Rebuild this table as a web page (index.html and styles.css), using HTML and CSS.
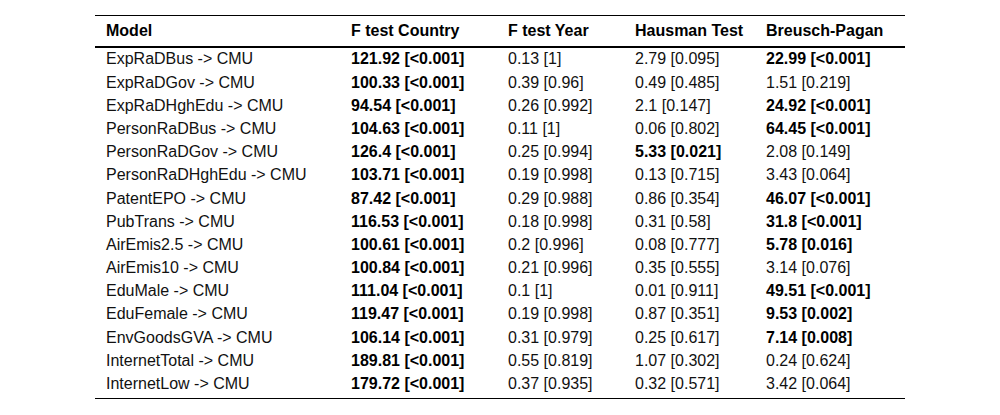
FILE: index.html
```html
<!DOCTYPE html>
<html>
<head>
<meta charset="utf-8">
<link rel="stylesheet" href="styles.css">
</head>
<body>
<table class="results">
  <colgroup>
    <col class="c-model">
    <col class="c-country">
    <col class="c-year">
    <col class="c-hausman">
    <col class="c-bp">
  </colgroup>
  <thead>
    <tr><th>Model</th><th>F test Country</th><th>F test Year</th><th>Hausman Test</th><th>Breusch-Pagan</th></tr>
  </thead>
  <tbody>
    <tr><td>ExpRaDBus -&gt; CMU</td><td class="b">121.92 [&lt;0.001]</td><td>0.13 [1]</td><td>2.79 [0.095]</td><td class="b">22.99 [&lt;0.001]</td></tr>
    <tr><td>ExpRaDGov -&gt; CMU</td><td class="b">100.33 [&lt;0.001]</td><td>0.39 [0.96]</td><td>0.49 [0.485]</td><td>1.51 [0.219]</td></tr>
    <tr><td>ExpRaDHghEdu -&gt; CMU</td><td class="b">94.54 [&lt;0.001]</td><td>0.26 [0.992]</td><td>2.1 [0.147]</td><td class="b">24.92 [&lt;0.001]</td></tr>
    <tr><td>PersonRaDBus -&gt; CMU</td><td class="b">104.63 [&lt;0.001]</td><td>0.11 [1]</td><td>0.06 [0.802]</td><td class="b">64.45 [&lt;0.001]</td></tr>
    <tr><td>PersonRaDGov -&gt; CMU</td><td class="b">126.4 [&lt;0.001]</td><td>0.25 [0.994]</td><td class="b">5.33 [0.021]</td><td>2.08 [0.149]</td></tr>
    <tr><td>PersonRaDHghEdu -&gt; CMU</td><td class="b">103.71 [&lt;0.001]</td><td>0.19 [0.998]</td><td>0.13 [0.715]</td><td>3.43 [0.064]</td></tr>
    <tr><td>PatentEPO -&gt; CMU</td><td class="b">87.42 [&lt;0.001]</td><td>0.29 [0.988]</td><td>0.86 [0.354]</td><td class="b">46.07 [&lt;0.001]</td></tr>
    <tr><td>PubTrans -&gt; CMU</td><td class="b">116.53 [&lt;0.001]</td><td>0.18 [0.998]</td><td>0.31 [0.58]</td><td class="b">31.8 [&lt;0.001]</td></tr>
    <tr><td>AirEmis2.5 -&gt; CMU</td><td class="b">100.61 [&lt;0.001]</td><td>0.2 [0.996]</td><td>0.08 [0.777]</td><td class="b">5.78 [0.016]</td></tr>
    <tr><td>AirEmis10 -&gt; CMU</td><td class="b">100.84 [&lt;0.001]</td><td>0.21 [0.996]</td><td>0.35 [0.555]</td><td>3.14 [0.076]</td></tr>
    <tr><td>EduMale -&gt; CMU</td><td class="b">111.04 [&lt;0.001]</td><td>0.1 [1]</td><td>0.01 [0.911]</td><td class="b">49.51 [&lt;0.001]</td></tr>
    <tr><td>EduFemale -&gt; CMU</td><td class="b">119.47 [&lt;0.001]</td><td>0.19 [0.998]</td><td>0.87 [0.351]</td><td class="b">9.53 [0.002]</td></tr>
    <tr><td>EnvGoodsGVA -&gt; CMU</td><td class="b">106.14 [&lt;0.001]</td><td>0.31 [0.979]</td><td>0.25 [0.617]</td><td class="b">7.14 [0.008]</td></tr>
    <tr><td>InternetTotal -&gt; CMU</td><td class="b">189.81 [&lt;0.001]</td><td>0.55 [0.819]</td><td>1.07 [0.302]</td><td>0.24 [0.624]</td></tr>
    <tr><td>InternetLow -&gt; CMU</td><td class="b">179.72 [&lt;0.001]</td><td>0.37 [0.935]</td><td>0.32 [0.571]</td><td>3.42 [0.064]</td></tr>
  </tbody>
</table>
</body>
</html>
```

FILE: styles.css
```css
html, body {
  margin: 0;
  padding: 0;
  background: #ffffff;
}

body {
  font-family: "Liberation Sans", Arial, sans-serif;
  font-size: 16px;
  color: #111111;
}

.results {
  width: 810px;
  margin: 15px auto 0;
  border-collapse: separate;
  border-spacing: 0;
  table-layout: fixed;
}

.c-model { width: 245px; }
.c-country { width: 157px; }
.c-year { width: 127px; }
.c-hausman { width: 131px; }
.c-bp { width: 150px; }

.results th,
.results td {
  text-align: left;
  vertical-align: top;
  white-space: nowrap;
  line-height: 18.4px;
  padding: 2.4px 0 2.4px 11px;
}

.results th {
  font-weight: bold;
  color: #000000;
  border-top: 1px solid #000000;
  border-bottom: 2px solid #000000;
  padding-top: 6px;
  padding-bottom: 5.6px;
}

.results td.b {
  font-weight: bold;
  color: #000000;
}

.results tbody tr:last-child td {
  padding-bottom: 4.4px;
  border-bottom: 1px solid #000000;
}
```
